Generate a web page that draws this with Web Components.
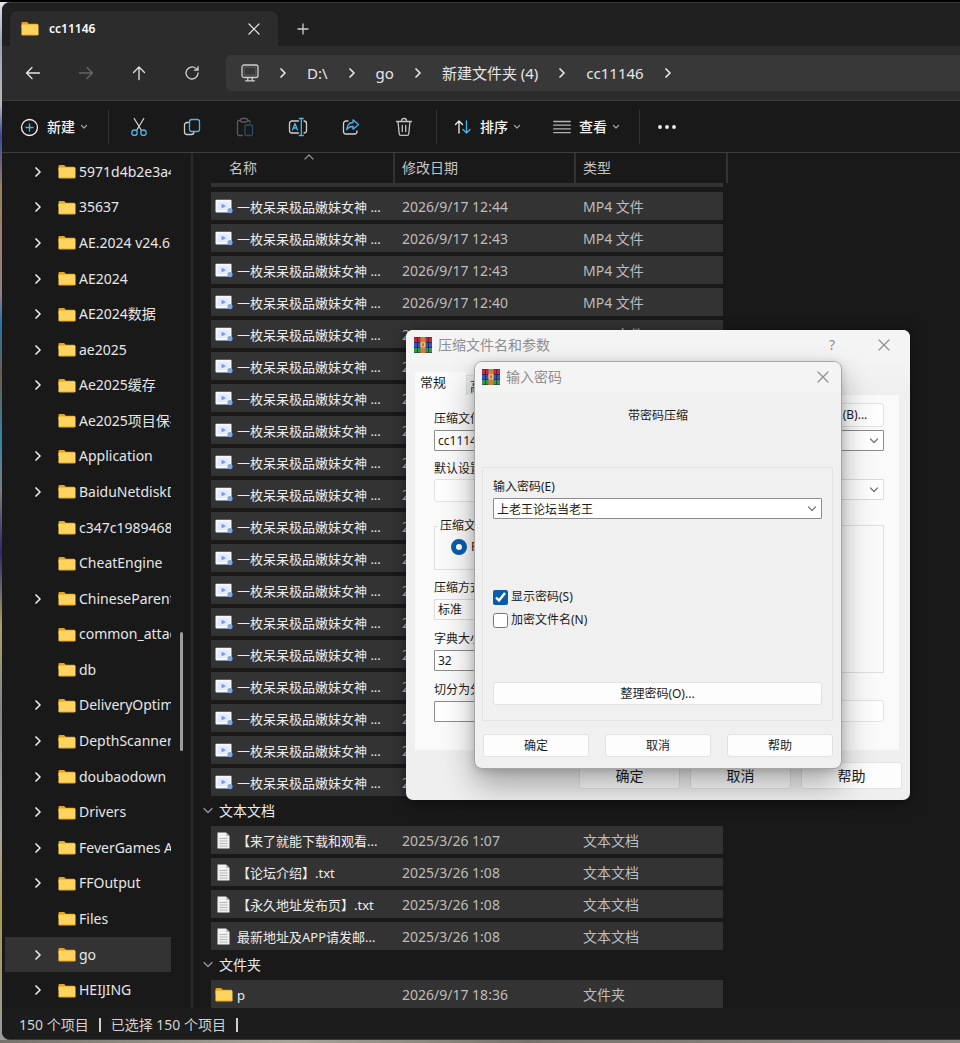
<!DOCTYPE html>
<html lang="zh-CN">
<head>
<meta charset="utf-8">
<title>cc11146</title>
<style>
  html, body { margin: 0; height: 100%; }
  body {
    font-family: "Noto Sans", "Noto Sans CJK SC", sans-serif;
    font-size: 14px;
    line-height: 20px;
    color: #e6e6e6;
    background: #000;
  }
</style>
</head>
<body>
<desktop-screen>
  <explorer-window></explorer-window>
  <archive-dialog slot="overlay"></archive-dialog>
  <password-dialog slot="overlay"></password-dialog>
</desktop-screen>

<script>
const stroke = (w, h, body, color = "currentColor", sw = 1.3) =>
  `<svg width="${w}" height="${h}" viewBox="0 0 ${w} ${h}" fill="none" stroke="${color}" stroke-width="${sw}" stroke-linecap="round" stroke-linejoin="round" aria-hidden="true">${body}</svg>`;
const BLUE = "#4cb4e6";
const icons = {
  folder: `<svg width="18" height="15" viewBox="0 0 18 15" aria-hidden="true"><path d="M0.5 2a1 1 0 0 1 1-1h4.6l1.7 1.8H16a1 1 0 0 1 1 1V7H0.5z" fill="#e8a317"/><rect x="0.5" y="3.6" width="17" height="10.6" rx="1" fill="#ffd45e"/><path d="M0.5 13.2h17a1 1 0 0 1-1 1h-15a1 1 0 0 1-1-1z" fill="#eeb63a"/></svg>`,
  video: `<svg width="18" height="15" viewBox="0 0 18 15" aria-hidden="true"><rect x="0.5" y="0.8" width="16" height="12.6" rx="1" fill="#f3f7fd"/><rect x="2.5" y="3" width="12" height="8" fill="#e3ebf8"/><path d="M6.6 4.8l4.4 2.2-4.4 2.2z" fill="#6f93dc"/><circle cx="15" cy="11.6" r="2.6" fill="#7ea4e8"/></svg>`,
  text: `<svg width="18" height="17" viewBox="0 0 18 17" aria-hidden="true"><path d="M2.5 0.5h8.5l3.5 3.5v12.5h-12z" fill="#f1f1f1"/><path d="M11 0.5v3.5h3.5z" fill="#bdbdbd"/><path d="M4.5 6.5h8M4.5 9h8M4.5 11.5h8M4.5 14h8" stroke="#b5b5b5"/></svg>`,
  chevRight: stroke(8, 10, '<path d="M2 1l4 4-4 4"/>', "currentColor", 1.7),
  chevDown: stroke(8, 6, '<path d="M1.500 1.500L4 4l2.500-2.500"/>', "#a0a0a0", 1.2),
  chevGroup: stroke(10, 7, '<path d="M1 1.5l4 4 4-4"/>', "#9a9a9a", 1.2),
  chevUp: stroke(10, 6, '<path d="M1 5l4-4 4 4"/>', "#909090", 1.2),
  chevCombo: stroke(10, 6, '<path d="M1.500 1L5 4.500 8.500 1"/>', "#777", 1.2),
  close: stroke(12, 12, '<path d="M1 1l10 10M11 1L1 11"/>', "currentColor", 1.2),
  plus: stroke(12, 12, '<path d="M6 1v10M1 6h10"/>', "#cfcfcf"),
  back: stroke(16, 14, '<path d="M14.500 7H1.500M7 1.500L1.500 7 7 12.500"/>'),
  forward: stroke(16, 14, '<path d="M1.500 7h13M9 1.500L14.500 7 9 12.500"/>'),
  up: stroke(14, 16, '<path d="M7 14.500V2M1.500 7.500L7 2l5.500 5.500"/>'),
  refresh: stroke(16, 16, '<path d="M14 8a6 6 0 1 1-1.900-4.400L14 5.200M14 1.700V5.200h-3.500"/>', "#cfcfcf"),
  monitor: stroke(18, 18, '<rect x="1" y="1" width="16" height="12.5" rx="2"/><rect x="3.2" y="3.2" width="11.6" height="8" rx="0.5" stroke-opacity=".2"/><path d="M6.8 13.5V16.5M11.2 13.5V16.5M4.5 16.8h9"/>', "#cfcfcf"),
  create: stroke(19, 19, `<circle cx="9.5" cy="9.5" r="8"/><path stroke="${BLUE}" d="M9.5 6v7M6 9.5h7"/>`),
  cut: stroke(18, 20, `<path d="M4.2 1.5l7.3 12M13.8 1.5l-7.3 12"/><g stroke="${BLUE}"><circle cx="4.5" cy="15.7" r="2.7"/><circle cx="13.5" cy="15.7" r="2.7"/></g>`),
  copy: stroke(18, 18, `<path d="M5.5 4.5H4A2.5 2.5 0 0 0 1.5 7v7A2.5 2.5 0 0 0 4 16.5h4.5a2.5 2.5 0 0 0 2.5-2"/><rect stroke="${BLUE}" x="6.5" y="1.5" width="10" height="12" rx="2.2"/>`),
  paste: stroke(18, 20, '<path d="M4.5 3.5H3A1.5 1.5 0 0 0 1.5 5v12A1.5 1.5 0 0 0 3 18.500h3.500M12 3.500h.5A1.500 1.500 0 0 1 14 5v.5"/><rect x="4.500" y="1.500" width="7" height="3.500" rx="1.500"/><rect x="9" y="8" width="7.500" height="10.500" rx="1.500" stroke="#245067"/>', "#5a5a5a"),
  rename: stroke(20, 20, `<path d="M10.500 4H4A2.500 2.500 0 0 0 1.500 6.500v7A2.500 2.500 0 0 0 4 16h6.500M16 4a2.500 2.500 0 0 1 2.500 2.500v7A2.500 2.500 0 0 1 16 16"/><g stroke="${BLUE}"><path d="M13.300 1.500v17M11.300 1.500h4M11.300 18.500h4M4.500 13l2.500-6.500L9.500 13M5.400 11h3.200"/></g>`),
  share: stroke(18, 18, `<path d="M6 3H4A2.500 2.500 0 0 0 1.500 5.500v8A2.500 2.500 0 0 0 4 16h8.500a2.500 2.500 0 0 0 2.500-2.500V13"/><path stroke="${BLUE}" d="M11 1.800l5.500 4.700-5.500 4.700V8.500C8 8.400 6 9.500 4.800 11.800 5 7.500 7.200 4.700 11 4.500z"/>`),
  trash: stroke(18, 20, '<path d="M1.500 4.500h15M6.500 4.500v-1a2 2 0 0 1 2-2h1a2 2 0 0 1 2 2v1M3 4.500l1.200 12a2 2 0 0 0 2 1.900h5.600a2 2 0 0 0 2-1.900L15 4.500M7.300 8.500v6M10.700 8.500v6"/>', "#c4c4c4"),
  sort: stroke(18, 16, `<path d="M5 14V2M1.500 5.500L5 2l3.500 3.500"/><path stroke="${BLUE}" d="M12.500 2v12M9 10.500l3.500 3.500 3.500-3.500"/>`),
  view: stroke(18, 14, '<path d="M.7 1.500h16.600M.7 5.200h16.600M.7 8.900h16.600M.7 12.600h16.600"/>', "#b4b4b4"),
  more: `<svg width="20" height="6" viewBox="0 0 20 6" fill="#f0f0f0" aria-hidden="true"><circle cx="3" cy="3" r="1.900"/><circle cx="10" cy="3" r="1.900"/><circle cx="17" cy="3" r="1.900"/></svg>`,
  books: `<svg width="18" height="16" viewBox="0 0 18 16" aria-hidden="true"><rect width="18" height="16" fill="#241c28"/><rect y="0.300" width="18" height="4.700" fill="#c22a3c"/><rect y="5.600" width="18" height="4.600" fill="#3450c4"/><rect y="10.800" width="18" height="4.700" fill="#2e9a50"/><path d="M3.500 .3v4.700M3.500 5.600v4.600M3.500 10.800v4.700M14.500 .3v4.700M14.500 5.600v4.600M14.500 10.800v4.700" stroke="#1a1626" stroke-opacity=".6"/><rect x="6.500" y="0" width="5" height="16" fill="#cc8040"/><rect x="6.500" y="5" width="5" height="5.500" fill="#f2b860"/><rect x="8.300" y="6.300" width="1.400" height="3" fill="#9a5a20"/></svg>`
};

const base = `
  :host, * { box-sizing: border-box; }
  svg { display: block; flex: none; }
  button { font: inherit; color: inherit; background: none; border: 0; padding: 0; margin: 0; }
`;
const define = (name, css, html) => customElements.define(name, class extends HTMLElement {
  connectedCallback() {
    if (this.shadowRoot) return;
    const root = this.attachShadow({ mode: "open" });
    root.innerHTML = `<style>${base}${css}</style>${typeof html === "function" ? html(this) : html}`;
  }
});

/* Desktop: the wallpaper edge behind the windows */
define("desktop-screen", `
  :host {
    display: flex; position: relative; min-height: 100vh; padding: 2px 0 3px 2px; overflow: hidden;
    background:
      linear-gradient(#000, #000) top / 100% 2px no-repeat,
      linear-gradient(90deg, #77736c, #a9a49a 30%, #77736c 55%, #8d8a86) bottom / 100% 3px no-repeat,
      linear-gradient(#e6e8ee 0, #9aa6b4 4%, #b8b8ba 10%, #3a4a9a 13%, #9a8060 18%, #96807c 28%, #2a75a8 31%, #6a5c4c 36%, #3585a5 42%, #7d7d80 47%, #30286a 53%, #a9a26a 60%, #85858a 68%, #a8a49c 80%, #a89a50 87%, #9a9aa0 100%) left / 10px 100% no-repeat;
  }
  ::slotted(explorer-window) { flex: 1; min-width: 0; }
  ::slotted(archive-dialog) { position: absolute; left: 406px; top: 330px; width: 504px; }
  ::slotted(password-dialog) { position: absolute; left: 474px; top: 361px; width: 368px; }
`, `<slot></slot><slot name="overlay"></slot>`);

define("explorer-window", `
  :host { display: flex; flex-direction: column; background: #191919; border: 1px solid #3a3a3a; border-width: 1px 0; border-radius: 8px 0 0 8px; overflow: hidden; }
  main { flex: 1; display: flex; min-height: 0; }
  file-tree { width: 191px; flex: none; }
  file-list { flex: 1; min-width: 0; }
`, `
  <tab-strip></tab-strip>
  <nav-bar></nav-bar>
  <command-bar></command-bar>
  <main><file-tree></file-tree><file-list></file-list></main>
  <status-bar></status-bar>
`);

define("tab-strip", `
  :host { display: flex; align-items: flex-end; height: 43px; padding-left: 8px; background: #202020; }
  .tab { display: flex; align-items: center; width: 268px; height: 35px; padding: 0 18px 0 11px; background: #2c2c2c; border-radius: 8px 8px 0 0; }
  .name { flex: 1; padding-left: 10px; font-size: 12px; font-weight: 600; color: #fff; }
  .add { padding: 0 0 11px 19px; }
`, `
  <div class="tab" role="tab" aria-selected="true">${icons.folder}<span class="name">cc11146</span><button aria-label="关闭标签页">${icons.close}</button></div>
  <button class="add" aria-label="新建标签页">${icons.plus}</button>
`);

define("nav-bar", `
  :host { display: flex; align-items: center; height: 54px; padding-left: 4px; background: #2c2c2c; font-size: 15px; }
  .nav { display: grid; place-items: center; width: 53px; height: 36px; }
  .nav:disabled { color: #666; }
  nav { flex: 1; display: flex; align-items: center; gap: 20px; height: 36px; margin-left: 8px; padding-left: 15px; background: #383838; border-radius: 5px 0 0 5px; }
  a { color: inherit; text-decoration: none; white-space: nowrap; }
`, `
  <button class="nav" aria-label="后退">${icons.back}</button>
  <button class="nav" aria-label="前进" disabled>${icons.forward}</button>
  <button class="nav" aria-label="上移">${icons.up}</button>
  <button class="nav" aria-label="刷新">${icons.refresh}</button>
  <nav aria-label="地址">
    ${icons.monitor}${icons.chevRight}
    <a href="#d">D:\\</a>${icons.chevRight}
    <a href="#go">go</a>${icons.chevRight}
    <a href="#new">新建文件夹 (4)</a>${icons.chevRight}
    <a href="#cc">cc11146</a>${icons.chevRight}
  </nav>
`);

define("command-bar", `
  :host { display: flex; align-items: center; height: 53px; padding-left: 18px; border: 1px solid #3c3c3c; border-width: 1px 0; font-weight: 500; color: #cfcfcf; }
  .menu { display: flex; align-items: center; gap: 8px; height: 36px; padding-top: 1px; color: #f2f2f2; }
  .menu svg:last-child { margin-left: -3px; }
  .icon { display: grid; place-items: center; width: 53px; height: 36px; padding-top: 1px; }
  i { width: 1px; height: 34px; background: #333; }
  .s1 { margin: 0 3px 0 20px; }
  .s2 { margin: 0 17px 0 6px; }
  .s3 { margin: 0 17px 0 19px; }
  .view { margin-left: 32px; }
`, `
  <button class="menu">${icons.create}<span>新建</span>${icons.chevDown}</button>
  <i class="s1"></i>
  <button class="icon" aria-label="剪切">${icons.cut}</button>
  <button class="icon" aria-label="复制">${icons.copy}</button>
  <button class="icon" aria-label="粘贴" disabled>${icons.paste}</button>
  <button class="icon" aria-label="重命名">${icons.rename}</button>
  <button class="icon" aria-label="共享">${icons.share}</button>
  <button class="icon" aria-label="删除">${icons.trash}</button>
  <i class="s2"></i>
  <button class="menu">${icons.sort}<span>排序</span>${icons.chevDown}</button>
  <button class="menu view">${icons.view}<span>查看</span>${icons.chevDown}</button>
  <i class="s3"></i>
  <button aria-label="更多">${icons.more}</button>
`);

define("tree-item", `
  :host { flex: 1; display: flex; align-items: center; padding-left: 29px; margin-left: 3px; white-space: nowrap; overflow: hidden; }
  :host([selected]) { background: #333; }
  .exp { flex: none; width: 24px; height: 10px; }
  slot { display: block; }
  .text { flex: 1; min-width: 0; padding-left: 3px; overflow: hidden; }
`, el => `<span class="exp">${el.hasAttribute("leaf") ? "" : icons.chevRight}</span>${icons.folder}<span class="text"><slot></slot></span>`);

/* A leading "-" marks a folder without children */
const folders = ["5971d4b2e3a4", "35637", "AE.2024 v24.6.", "AE2024", "AE2024数据", "ae2025", "Ae2025缓存", "-Ae2025项目保存", "Application", "BaiduNetdiskD", "-c347c1989468", "-CheatEngine", "ChineseParent", "-common_attac", "-db", "DeliveryOptim", "DepthScanner", "doubaodown", "Drivers", "FeverGames Ap", "FFOutput", "-Files", "go", "HEIJING"];
define("file-tree", `
  :host { display: flex; border-right: 2px solid #2b2b2b; }
  .items { flex: 1; min-width: 0; display: flex; flex-direction: column; padding-top: 1px; }
  .track { width: 20px; display: flex; flex-direction: column; align-items: center; }
  .before { flex: 480; } .thumb { flex: 119; width: 3px; border-radius: 2px; background: #9c9c9c; } .after { flex: 257; }
`, `<div class="items">${folders.map(f => {
  const leaf = f[0] === "-", name = leaf ? f.slice(1) : f;
  return `<tree-item ${leaf ? "leaf" : ""} ${name === "go" ? "selected" : ""}>${name}</tree-item>`;
}).join("")}</div><div class="track"><span class="before"></span><span class="thumb"></span><span class="after"></span></div>`);

const times = ["12:44", "12:43", "12:43", "12:40", "12:38", "12:38", "12:37", "12:36", "12:35", "12:35", "12:34", "12:33", "12:32", "12:31", "12:30", "12:29", "12:28", "12:27", "12:26"];
const row = (icon, name, date, type) =>
  `<tr class="file"><td class="n"><span class="cell">${icons[icon]}<span>${name}</span></span></td><td>${date}</td><td class="t">${type}</td></tr>`;
const group = name => `<tr class="group"><th colspan="3" scope="rowgroup"><button>${icons.chevGroup}${name}</button></th></tr>`;
define("file-list", `
  :host { display: block; overflow: hidden; }
  table { width: 535px; table-layout: fixed; border-collapse: separate; border-spacing: 0; white-space: nowrap; }
  col.c1 { width: 202px; } col.c2 { width: 181px; }
  th { font-weight: 400; text-align: left; }
  td, th { padding: 0 0 0 7px; }
  thead th { height: 30px; border-right: 2px solid #333; color: #c4c4c4; }
  thead th:first-child { padding-left: 36px; }
  .head { position: relative; display: flex; align-items: center; height: 30px; }
  .sort { position: absolute; left: 75px; top: 1px; }
  td { height: 32px; background: #333 padding-box; border-bottom: 4px solid transparent; color: #bdbdbd; padding-top: 1px; }
  td.n { border-left: 18px solid transparent; padding-left: 4px; color: #ececec; font-size: 13px; }
  td.t { border-right: 5px solid transparent; }
  tr.peek td { height: 9px; border-bottom-width: 5px; }
  tr.end td { height: 28px; border-bottom: 0; }
  .cell { display: flex; align-items: center; gap: 4px; }
  .group th { height: 26px; padding: 0 0 5px 10px; color: #ececec; }
  .group button { display: flex; align-items: center; gap: 6px; font-size: 14px; }
`, `<table>
  <colgroup><col class="c1"><col class="c2"><col></colgroup>
  <thead><tr><th scope="col"><span class="head">名称<span class="sort">${icons.chevUp}</span></span></th><th scope="col">修改日期</th><th scope="col">类型</th></tr></thead>
  <tbody>
    <tr class="peek"><td class="n"></td><td></td><td class="t"></td></tr>
    ${times.map(t => row("video", "一枚呆呆极品嫩妹女神 ...", "2026/9/17 " + t, "MP4 文件")).join("")}
    ${group("文本文档")}
    ${row("text", "【来了就能下载和观看...", "2025/3/26 1:07", "文本文档")}
    ${row("text", "【论坛介绍】.txt", "2025/3/26 1:08", "文本文档")}
    ${row("text", "【永久地址发布页】.txt", "2025/3/26 1:08", "文本文档")}
    ${row("text", "最新地址及APP请发邮...", "2025/3/26 1:08", "文本文档")}
    ${group("文件夹")}
    ${row("folder", "p", "2026/9/17 18:36", "文件夹").replace('"file"', '"file end"')}
  </tbody></table>`);

define("status-bar", `
  :host { display: flex; align-items: center; gap: 10px; height: 31px; padding: 3px 0 0 17px; background: #1c1c1c; color: #d2d2d2; }
  i { width: 2px; height: 14px; background: #d0d0d0; }
`, `<span>150 个项目</span><i></i><span>已选择 150 个项目</span><i></i>`);

/* Light dialogs */
define("dialog-title", `
  :host { display: flex; align-items: center; gap: 6px; height: 30px; padding: 0 20px 0 8px; background: #f4f4f4; color: #8f8f8f; font-size: 14px; }
  .name { flex: 1; }
  .help { padding-right: 37px; }
`, el => `${icons.books}<span class="name"><slot></slot></span>${el.hasAttribute("help") ? '<button class="help" aria-label="帮助">?</button>' : ""}<button aria-label="关闭">${icons.close}</button>`);

const formCss = `
  .btn { display: grid; place-items: center; background: #fdfdfd; border: 1px solid #e2e2e2; border-radius: 3px; color: #1b1b1b; }
  .combo { display: grid; align-items: center; }
  .combo > * { grid-area: 1 / 1; }
  .combo svg { justify-self: end; margin-right: 5px; pointer-events: none; }
  input.field, select.field { appearance: none; font: inherit; color: #1b1b1b; background: #fff; width: 100%; height: 21px; margin: 0; padding: 0 3px; border: 1px solid #8c8c8c; border-radius: 1px; outline: 0; }
  input.soft, select.soft { border-color: #dcdcdc; background: #fdfdfd; }
`;
const combo = (id, value) => `<span class="combo"><input class="field" id="${id}" value="${value}">${icons.chevCombo}</span>`;

define("archive-dialog", formCss + `
  :host { display: block; background: #efefef; border-radius: 7px; overflow: hidden; color: #1b1b1b; font-size: 12px; line-height: 16px; box-shadow: 0 2px 14px rgba(0,0,0,.5); }
  .tabs { display: flex; align-items: flex-end; padding: 12px 0 0 9px; background: linear-gradient(#f4f4f4, #efefef); }
  .tab { height: 23px; padding: 0 5px 4px; width: 51px; text-align: left; background: #fafafa; font-size: 13px; }
  .tab + .tab { height: 20px; padding: 0 3px; background: #ececec; border: 1px solid #ddd; border-bottom: 0; }
  .panel { margin: 0 11px 0 9px; padding: 8px 15px 28px 19px; background: #fafafa; }
  label { display: block; height: 16px; white-space: nowrap; }
  .top { display: flex; justify-content: space-between; align-items: flex-end; height: 24px; margin-bottom: 3px; }
  .top .btn { width: 82px; height: 24px; }
  .profile { margin-top: 10px; }
  .pair { display: flex; justify-content: space-between; margin-top: 2px; }
  .pair .btn { width: 150px; height: 23px; }
  .pair .combo { width: 200px; height: 21px; }
  .cols { display: grid; grid-template-columns: 180px 1fr; gap: 16px; margin-top: 16px; }
  .col { display: flex; flex-direction: column; }
  .col:last-child { justify-content: space-between; }
  fieldset { margin: 0; padding: 5px 16px; border: 1px solid #dedede; height: 52px; min-width: 0; }
  fieldset.tall { height: 148px; margin-top: 7px; }
  legend { padding: 0 2px; margin-left: -13px; height: 16px; }
  .radio { display: flex; align-items: center; gap: 4px; }
  input[type=radio] { appearance: none; flex: none; width: 16px; height: 16px; margin: 0; border: 5px solid #0a5cab; border-radius: 50%; background: #fff; }
  .col label.cap { margin: 11px 0 3px; }
  .col fieldset + label.cap { margin-top: 10px; }
  .col > .btn { height: 22px; }
  .foot { display: flex; justify-content: flex-end; gap: 10px; padding: 12px 8px 11px; }
  .foot .btn { width: 101px; height: 27px; font-size: 14px; }
`, `
  <dialog-title help>压缩文件名和参数</dialog-title>
  <div class="tabs" role="tablist"><button class="tab" role="tab">常规</button><button class="tab" role="tab">高级</button></div>
  <div class="panel">
    <div class="top"><label for="name">压缩文件</label><button class="btn">浏览(B)...</button></div>
    ${combo("name", "cc11146")}
    <label class="profile" for="mode">默认设置</label>
    <div class="pair"><button class="btn" aria-label="配置"></button><span class="combo"><select class="field soft" id="mode"><option></option></select>${icons.chevCombo}</span></div>
    <div class="cols">
      <div class="col">
        <fieldset><legend>压缩文</legend><label class="radio"><input type="radio" checked>R</label></fieldset>
        <label class="cap" for="method">压缩方式</label>
        <select class="field soft" id="method"><option>标准</option></select>
        <label class="cap" for="dict">字典大小</label>
        <select class="field" id="dict"><option>32</option></select>
        <label class="cap" for="vol">切分为分</label>
        <input class="field" id="vol">
      </div>
      <div class="col"><fieldset class="tall"></fieldset><button class="btn" aria-label="设置密码"></button></div>
    </div>
  </div>
  <div class="foot"><button class="btn">确定</button><button class="btn">取消</button><button class="btn">帮助</button></div>
`);

define("password-dialog", formCss + `
  :host { display: block; background: #f0f0f0; border: 1px solid #a6a6a6; border-radius: 8px; overflow: hidden; color: #1b1b1b; font-size: 12px; line-height: 16px; box-shadow: 0 16px 32px rgba(0,0,0,.32), 0 2px 8px rgba(0,0,0,.16); }
  dialog-title { padding-right: 12px; padding-left: 7px; }
  h2 { margin: 0; padding: 16px 0 43px; font: inherit; text-align: center; }
  section { display: flex; flex-direction: column; margin: 0 8px 0 7px; padding: 11px 10px 15px 10px; border: 1px solid #e4e4e4; }
  .check { display: flex; align-items: center; gap: 3px; height: 16px; }
  .check input { width: 15px; height: 15px; margin: 0; accent-color: #0a5cab; }
  .cap { margin-bottom: 3px; }
  .combo { margin-bottom: 70px; }
  .check + .check { margin: 7px 0 54px; }
  .btn { height: 23px; }
  .foot { display: grid; grid-template-columns: repeat(3, 1fr); gap: 16px; padding: 13px 8px 11px; }
`, `
  <dialog-title>输入密码</dialog-title>
  <h2>带密码压缩</h2>
  <section>
    <label class="cap" for="pw">输入密码(E)</label>
    ${combo("pw", "上老王论坛当老王")}
    <label class="check"><input type="checkbox" checked>显示密码(S)</label>
    <label class="check"><input type="checkbox">加密文件名(N)</label>
    <button class="btn">整理密码(O)...</button>
  </section>
  <div class="foot"><button class="btn">确定</button><button class="btn">取消</button><button class="btn">帮助</button></div>
`);
</script>
</body>
</html>
